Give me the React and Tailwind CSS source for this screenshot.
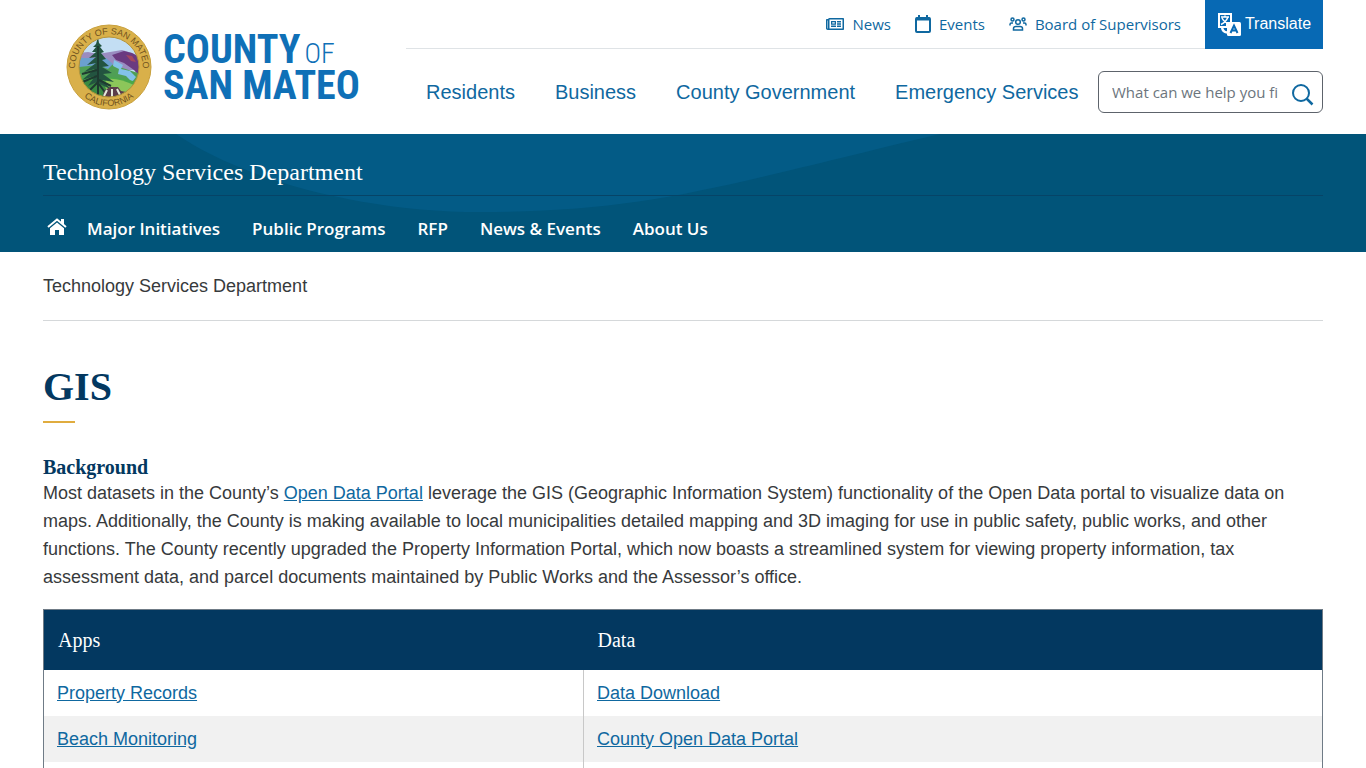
import React, { useState } from 'react';
import { FaRegNewspaper } from 'react-icons/fa';

const topLinks = [
  { label: 'News', icon: 'news' },
  { label: 'Events', icon: 'events' },
  { label: 'Board of Supervisors', icon: 'board' },
];

const mainLinks = ['Residents', 'Business', 'County Government', 'Emergency Services'];

const departmentLinks = ['Major Initiatives', 'Public Programs', 'RFP', 'News & Events', 'About Us'];

const resources = [
  { app: 'Property Records', data: 'Data Download' },
  { app: 'Beach Monitoring', data: 'County Open Data Portal' },
  { app: '', data: '' },
];

const CountySeal = () => (
  <svg viewBox="0 0 86 86" className="w-[86px] h-[86px] shrink-0" aria-hidden="true">
    <defs>
      <clipPath id="seal-scene"><circle cx="43" cy="43" r="30" /></clipPath>
      <path id="seal-top" d="M9.500 50 A34 34 0 1 1 76.500 50" />
      <path id="seal-bottom" d="M4 43 A39 39 0 0 0 82 43" />
    </defs>
    <circle cx="43" cy="43" r="42" fill="#d9b04a" stroke="#c8a03c" strokeWidth="1" />
    <g clipPath="url(#seal-scene)">
      <rect x="12" y="12" width="62" height="62" fill="#c3def3" />
      <path d="M12 29 L22 28 32 30 44 28 56 26 66 29 75 33 V46 H12Z" fill="#9a8cc0" />
      <path d="M46 31 L58 27 66 29 75 34 V54 L68 46 58 39 50 36Z" fill="#6a3a80" />
      <path d="M60 31 L66 32 70 38 65 37Z" fill="#a3475f" />
      <path d="M12 38 Q28 34 42 39 T75 50 V75 H12Z" fill="#4f9f55" />
      <path d="M12 34 H40 L47 40 42 45 32 41 12 43Z" fill="#6ba0cf" />
      <path d="M48 36 L57 41 55 45 64 47 70 53 66 58 60 52 52 50 53 45 47 42Z" fill="#83c2e8" />
      <path d="M12 54 Q36 48 75 59 V75 H12Z" fill="#4aa84a" />
      <path d="M40 55 Q52 53 70 62 L62 72 38 73Z" fill="#8cc65a" />
      <path d="M12 58 Q24 54 38 60 L44 75 H12Z" fill="#3a8a42" />
      <path d="M32 13 L30 20 27 23 30 23 26 28 30 28 23 34 30 33 21 41 30 39 18 48 29 45 16 56 29 52 22 62 31 58 34 60 46 66 36 56 48 58 37 50 46 49 36 43 43 42 36 36 40 35 35 29 38 28 34 23 36 22 33 19Z" fill="#235440" />
      <path d="M32 22 V72 M32 58 L22 68 M33 56 L45 62 M33 60 L40 70 M31 52 L14 59 M31 46 L16 50" stroke="#1e3a30" strokeWidth="2" fill="none" />
      <path d="M38 67 L44 63 52 63 55 67 60 68 56 75 H36Z" fill="#5b3c4a" />
      <path d="M41 66 L38 72 M46 65 L46 73 M51 65 L54 71" stroke="#e5eadb" strokeWidth="2" />
    </g>
    <circle cx="43" cy="43" r="30" fill="none" stroke="#b59337" />
    <g fill="#70521d" fontFamily="Liberation Sans, sans-serif" fontSize="9">
      <text textAnchor="middle"><textPath href="#seal-top" startOffset="50%">COUNTY OF SAN MATEO</textPath></text>
      <text textAnchor="middle"><textPath href="#seal-bottom" startOffset="50%">CALIFORNIA</textPath></text>
    </g>
  </svg>
);

const CalendarIcon = () => (
  <svg viewBox="0 0 16 18" className="w-4 h-[18px]" fill="none" stroke="currentColor" strokeWidth="2" aria-hidden="true">
    <rect x="1" y="3" width="14" height="14" rx="1" />
    <path d="M1 4 H15" strokeWidth="3" />
    <path d="M4 0 V4 M12 0 V4" />
  </svg>
);

const PeopleIcon = () => (
  <svg viewBox="0 0 18 14" className="w-[18px] h-3.5" fill="none" stroke="currentColor" strokeWidth="1.500" aria-hidden="true">
    <circle cx="9" cy="5" r="2.300" />
    <circle cx="3.500" cy="2.500" r="1.500" />
    <circle cx="14.500" cy="2.500" r="1.500" />
    <path d="M4.500 13 V11.500 Q4.500 9.500 7 9.500 H11 Q13.500 9.500 13.500 11.500 V13Z" />
    <path d="M1 8.500 V7.500 Q1 6 2.500 6 H4 M14 6 H15.500 Q17 6 17 7.500 V8.500" />
  </svg>
);

const TranslateIcon = () => (
  <svg viewBox="0 0 24 24" className="w-6 h-6" aria-hidden="true">
    <path d="M2 2 H14 V11 H10 V15 H2Z" fill="none" stroke="#fff" strokeWidth="2" />
    <path d="M4 5 H12 M8 3.500 V5 M5 6 Q7 10 12 12 M11 5 Q9 10 4 12.500" fill="none" stroke="#fff" strokeWidth="1.500" />
    <path d="M5 15 Q5.500 20 10 20.500" fill="none" stroke="#fff" strokeWidth="2.500" />
    <rect x="10" y="10" width="14" height="14" rx="1.500" fill="#fff" />
    <path d="M13.500 21 L17 13.500 20.500 21 M14.700 18.500 H19.300" fill="none" stroke="#0769b4" strokeWidth="2" />
  </svg>
);

const HomeIcon = () => (
  <svg viewBox="0 0 20 18" className="w-5 h-[18px]" aria-hidden="true">
    <path d="M1 9 L10 1.500 19 9" fill="none" stroke="#fff" strokeWidth="2" />
    <path d="M14 1 H17 V7 L14 4.500Z" fill="#fff" />
    <path d="M10 4.500 L17 10.300 V17 H12 V12 H8 V17 H3 V10.300Z" fill="#fff" />
  </svg>
);

const SearchIcon = () => (
  <svg viewBox="0 0 24 24" className="w-6 h-6" fill="none" stroke="currentColor" aria-hidden="true">
    <circle cx="11" cy="11" r="8" strokeWidth="2" />
    <path d="M16.500 16.500 L22.500 22.500" strokeWidth="2.500" />
  </svg>
);

const TopIcon = ({ name }) => {
  if (name === 'news') return <FaRegNewspaper className="w-[18px] h-4" />;
  if (name === 'events') return <CalendarIcon />;
  return <PeopleIcon />;
};

const Header = () => {
  const [query, setQuery] = useState('');

  return (
    <header className="max-w-7xl mx-auto flex h-[134px]">
      <a href="#home" aria-label="County of San Mateo" className="w-[363px] shrink-0 flex items-start gap-[11px] pl-[23px] pt-6 text-[#0f70b7]">
        <CountySeal />
        <span className="block pt-2 font-['Roboto_Condensed',Roboto,sans-serif] font-bold text-[40px] leading-9 whitespace-nowrap">
          <span className="block">COUNTY<span className="font-light text-[28px] leading-none ml-1">OF</span></span>
          <span className="block">SAN MATEO</span>
        </span>
      </a>

      <div className="flex-1">
        <div className="flex justify-end h-[49px] border-b border-[#dfe3e6]">
          <nav aria-label="Quick links" className="flex items-center gap-6 mr-6 text-[#0f68a0] font-['Open_Sans',sans-serif] text-[15px]">
            {topLinks.map((link) => (
              <a key={link.label} href="#top" className="flex items-center gap-2 whitespace-nowrap hover:underline">
                <TopIcon name={link.icon} />
                {link.label}
              </a>
            ))}
          </nav>
          <button className="h-[49px] w-[118px] flex items-center justify-center gap-1 pb-0.5 bg-[#0769b4] text-white text-base">
            <TranslateIcon />
            Translate
          </button>
        </div>

        <div className="flex items-center justify-between pl-5 pt-[22px]">
          <nav aria-label="Main" className="flex gap-10 text-xl text-[#0f68a0]">
            {mainLinks.map((label) => (
              <a key={label} href="#main" className="whitespace-nowrap hover:underline">{label}</a>
            ))}
          </nav>
          <form onSubmit={(e) => e.preventDefault()} className="w-[225px] h-[42px] flex items-center justify-between pl-[13px] pr-2 border border-[#5d636b] rounded-md">
            <input
              type="text"
              aria-label="Search"
              value={query}
              onChange={(e) => setQuery(e.target.value)}
              placeholder="What can we help you find?"
              className="w-[167px] outline-none font-['Open_Sans',sans-serif] text-[15px] placeholder:text-[#6c757d]"
            />
            <button type="submit" aria-label="Submit search" className="mt-1 text-[#0f68a0]"><SearchIcon /></button>
          </form>
        </div>
      </div>
    </header>
  );
};

const DepartmentBanner = () => (
  <div className="relative overflow-hidden h-[118px] bg-[#015479] text-white">
    {/* Curved highlight behind the department title */}
    <svg viewBox="0 0 1366 118" preserveAspectRatio="none" className="absolute inset-0 w-full h-full" aria-hidden="true">
      <path d="M176 0 C245 47 365 78 480 78 C650 78 720 52 940 0Z" fill="#035b86" />
    </svg>
    <div className="relative max-w-7xl mx-auto">
      <div className="h-[62px] pt-[22px] border-b border-[#064467]">
        <a href="#department" className="font-['Liberation_Serif',serif] text-2xl leading-8">Technology Services Department</a>
      </div>
      <nav aria-label="Department" className="flex items-center gap-8 h-14 pt-2.5 pl-1 font-['Open_Sans',sans-serif] text-[17px] font-semibold">
        <a href="#home" aria-label="Home" className="-mr-3 mb-1"><HomeIcon /></a>
        {departmentLinks.map((label) => (
          <a key={label} href="#department" className="whitespace-nowrap hover:underline">{label}</a>
        ))}
      </nav>
    </div>
  </div>
);

const ResourceTable = () => (
  <table className="w-full mt-[18px] border border-[#6f7b86] border-collapse text-left">
    <thead>
      <tr className="h-[60px] bg-[#033860] text-white font-['Liberation_Serif',serif] text-xl">
        <th scope="col" className="w-[540px] px-3.5 font-normal">Apps</th>
        <th scope="col" className="px-3.5 font-normal">Data</th>
      </tr>
    </thead>
    <tbody>
      {resources.map((row, index) => (
        <tr key={index} className="h-[46px] odd:bg-white even:bg-[#f1f1f1]">
          <td className="px-[13px] border-r border-[#c8c8c8]"><a href="#apps" className="text-[#0f68a0] underline">{row.app}</a></td>
          <td className="px-[13px]"><a href="#data" className="text-[#0f68a0] underline">{row.data}</a></td>
        </tr>
      ))}
    </tbody>
  </table>
);

const App = () => {
  return (
    <div className="h-screen overflow-hidden bg-white text-[#373a3c] font-['Liberation_Sans',Arial,sans-serif]">
      <Header />
      <DepartmentBanner />
      <main className="max-w-7xl mx-auto text-lg leading-7">
        <div className="h-[69px] pt-5 border-b border-[#d5d8da]">Technology Services Department</div>
        <h1 className="mt-10 font-['Liberation_Serif',serif] text-[40px] leading-[52px] font-bold text-[#033860]">GIS</h1>
        <div className="w-8 h-0.5 mt-2 bg-[#e0ac3f]" />
        <h2 className="mt-8 font-['Liberation_Serif',serif] text-xl leading-6 font-bold text-[#033860]">Background</h2>
        <p>
          Most datasets in the County’s <a href="#open-data" className="text-[#0f68a0] underline">Open Data Portal</a> leverage the GIS (Geographic Information System) functionality of the Open Data portal to visualize data on maps. Additionally, the County is making available to local municipalities detailed mapping and 3D imaging for use in public safety, public works, and other functions. The County recently upgraded the Property Information Portal, which now boasts a streamlined system for viewing property information, tax assessment data, and parcel documents maintained by Public Works and the Assessor’s office.
        </p>
        <ResourceTable />
      </main>
    </div>
  );
};

export default App;
